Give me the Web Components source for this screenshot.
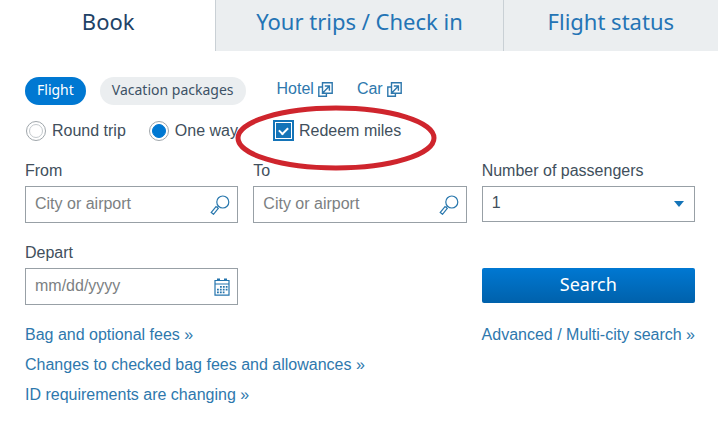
<!DOCTYPE html>
<html lang="en">
<head>
<meta charset="utf-8">
<title>Book</title>
<style>
  html { --ink: #414f5c; --link: #2e78ad; --tab: #2474b5; --blue: #0078d2; --pale: #ebeef0; --line: #98a0a6; --brand: "Noto Sans", "Open Sans", sans-serif; }
  body { margin: 0; background: #fff; color: var(--ink); font: 16px/20px "Liberation Sans", Arial, sans-serif; }
</style>
</head>
<body>
<booking-panel></booking-panel>
<script>
const define = (name, html, setup) => {
  const template = document.createElement('template');
  template.innerHTML = `<style>*, ::before, ::after { box-sizing: border-box; }</style>` + html;
  customElements.define(name, class extends HTMLElement {
    constructor() {
      super();
      this.attachShadow({ mode: 'open' }).append(template.content.cloneNode(true));
    }
    connectedCallback() { if (setup) setup(this, this.shadowRoot); }
  });
};

define('booking-tabs', `
<style>
  :host { display: block; }
  div { display: grid; grid-template-columns: 3fr 4fr 3fr; }
  button { border: 0; border-left: 1px solid #c9d0d5; margin: 0; padding: 5px 8px 14px; background: var(--pale); color: var(--tab); font: 22px/32px var(--brand); cursor: pointer; }
  button[aria-selected=true] { background: #fff; color: #1e4266; border-left-color: #fff; }
</style>
<div role="tablist">
  <button role="tab" aria-selected="true">Book</button>
  <button role="tab" aria-selected="false">Your trips / Check in</button>
  <button role="tab" aria-selected="false">Flight status</button>
</div>`, (host, root) => {
  root.querySelectorAll('button').forEach(b => b.onclick = () =>
    root.querySelectorAll('button').forEach(o => o.setAttribute('aria-selected', o === b)));
});

define('pill-button', `
<style>
  :host { display: block; }
  button { display: block; border: 0; border-radius: 14px; padding: 2px 12px 4px; background: var(--pale); color: #3d5266; font: 14px/22px var(--brand); cursor: pointer; }
  :host([active]) button { background: var(--blue); color: #fff; }
</style>
<button type="button"><slot></slot></button>`);

define('external-link', `
<style>
  :host { display: block; }
  a { display: flex; align-items: center; gap: 4px; color: var(--link); text-decoration: none; }
  svg { display: block; width: 15px; height: 15px; }
</style>
<a href="#"><slot></slot><svg viewBox="0 0 15 15" fill="none" stroke="currentColor" stroke-width="1.4" aria-hidden="true">
  <path d="M4.5 .8h9.7v10.4H4.5zM4 5H.8v9.2h7.6v-2.4M4 11.8 11 4.6M6.8 4h4.6v4.7"/></svg></a>`);

define('text-link', `
<style>
  :host { display: block; }
  a { color: var(--link); text-decoration: none; }
</style>
<a href="#"><slot></slot></a>`);

define('trip-options', `
<style>
  :host { display: flex; align-items: center; padding-left: 1px; }
  label { display: flex; align-items: center; gap: 6px; white-space: nowrap; }
  label + label { margin-left: 23px; }
  input { appearance: none; display: grid; place-items: center; margin: 0; width: 20px; height: 20px; border: 1px solid #9fa6ab; background: #fff; flex: none; }
  input::before { content: ""; }
  [type=radio] { border-radius: 50%; }
  [type=radio]::before { width: 14px; height: 14px; border: 1px solid #c4c9cd; border-radius: 50%; }
  [type=radio]:checked::before { border-color: var(--blue); background: var(--blue); }
  .miles { position: relative; gap: 5px; }
  label.miles { margin-left: 35px; }
  [type=checkbox] { width: 21px; height: 21px; border: 2px solid #1474b8; padding: 1px; }
  [type=checkbox]::before { width: 15px; height: 15px; }
  [type=checkbox]:checked { background: #1474b8 content-box; }
  [type=checkbox]:checked::before { width: 9px; height: 6px; border: solid #fff; border-width: 0 0 2px 2px; transform: translateY(-1px) rotate(-45deg); }
  .ring { position: absolute; left: -38px; top: -15px; width: 202px; height: 66px; pointer-events: none; z-index: 1; overflow: visible; }
</style>
<label><input type="radio" name="trip">Round trip</label>
<label><input type="radio" name="trip" checked>One way</label>
<label class="miles"><input type="checkbox" checked>Redeem miles
  <svg class="ring" viewBox="0 0 202 66" fill="none" stroke="#cf252d" stroke-width="5" aria-hidden="true"><ellipse cx="101" cy="33" rx="98" ry="30"/></svg>
</label>`);

const fieldStyle = `
<style>
  :host { display: block; min-width: 0; }
  label { display: block; margin-bottom: 5px; }
  .box { display: grid; align-items: center; }
  .box > * { grid-area: 1 / 1; }
  input, select { appearance: none; width: 100%; height: 37px; margin: 0; padding: 0 40px 2px 9px; border: 1px solid var(--line); border-radius: 0; background: #fff; color: var(--ink); font: inherit; }
  input::placeholder { color: #7c7f82; opacity: 1; }
  .icon { justify-self: end; display: block; pointer-events: none; }
</style>`;

define('text-field', fieldStyle + `
<style>
  .icon { margin-right: 8px; }
  :host([kind=date]) .search, :host(:not([kind=date])) .calendar { display: none; }
</style>
<label for="field"></label>
<div class="box"><input id="field" type="text">
<svg class="icon search" width="20" height="20" viewBox="0 0 20 20" fill="none" stroke="#2877ad" stroke-width="1.2" aria-hidden="true">
  <circle cx="12.8" cy="7" r="6"/><path d="M8.5 11.3 7.4 12.5M6 11.6 1.2 17.5l2.3 1.8L8.3 13.4z"/></svg>
<svg class="icon calendar" width="16" height="18" viewBox="0 0 16 18" fill="none" stroke="#2474ad" stroke-width="1.2" aria-hidden="true">
  <path d="M1 2.5h14v14.7H1zM1 6h14"/><path d="M3 1.2h3M10 1.2h3" stroke-width="1.6"/>
  <path d="M6 8.8h7.5M3 11.6h10.5M3 14.4h7.5" stroke-width="1.8" stroke-dasharray="1.8 1.1"/></svg>
</div>`, (host, root) => {
  root.querySelector('label').textContent = host.getAttribute('label');
  root.querySelector('input').placeholder = host.getAttribute('placeholder');
});

define('select-field', fieldStyle + `
<style>.icon { margin-right: 11px; } select { height: 36px; }</style>
<label for="field"></label>
<div class="box"><select id="field"><option>1</option></select>
<svg class="icon" width="10" height="6" viewBox="0 0 10 6" aria-hidden="true"><path d="M0 0h10L5 6z" fill="#1474b8"/></svg></div>`,
(host, root) => { root.querySelector('label').textContent = host.getAttribute('label'); });

define('search-button', `
<style>
  :host { display: block; }
  button { display: block; width: 100%; border: 0; border-radius: 2px; padding: 2px 8px 5px; background: linear-gradient(#0078d2, #0061ab); color: #fff; font: 18px/28px var(--brand); cursor: pointer; }
</style>
<button type="submit"><slot></slot></button>`);

define('booking-panel', `
<style>
  :host { display: block; }
  form { padding: 26px 23px 14px 25px; }
  .pills { display: flex; align-items: center; }
  .pills pill-button + pill-button { margin: 0 31px 0 14px; }
  .pills external-link { margin: 0 24px 4px 0; }
  trip-options { margin: 15px 0 20px; }
  .fields { display: grid; grid-template-columns: repeat(3, 1fr); gap: 20px 15px; align-items: start; }
  search-button { grid-column: 3; margin-top: 25px; }
  .links { display: flex; justify-content: space-between; margin-top: 15px; line-height: 30px; }
</style>
<booking-tabs></booking-tabs>
<form onsubmit="return false">
  <div class="pills">
    <pill-button active>Flight</pill-button>
    <pill-button>Vacation packages</pill-button>
    <external-link>Hotel</external-link>
    <external-link>Car</external-link>
  </div>
  <trip-options></trip-options>
  <div class="fields">
    <text-field label="From" placeholder="City or airport"></text-field>
    <text-field label="To" placeholder="City or airport"></text-field>
    <select-field label="Number of passengers"></select-field>
    <text-field kind="date" label="Depart" placeholder="mm/dd/yyyy"></text-field>
    <search-button>Search</search-button>
  </div>
  <div class="links">
    <div>
      <text-link>Bag and optional fees »</text-link>
      <text-link>Changes to checked bag fees and allowances »</text-link>
      <text-link>ID requirements are changing »</text-link>
    </div>
    <text-link>Advanced / Multi-city search »</text-link>
  </div>
</form>`);
</script>
</body>
</html>
